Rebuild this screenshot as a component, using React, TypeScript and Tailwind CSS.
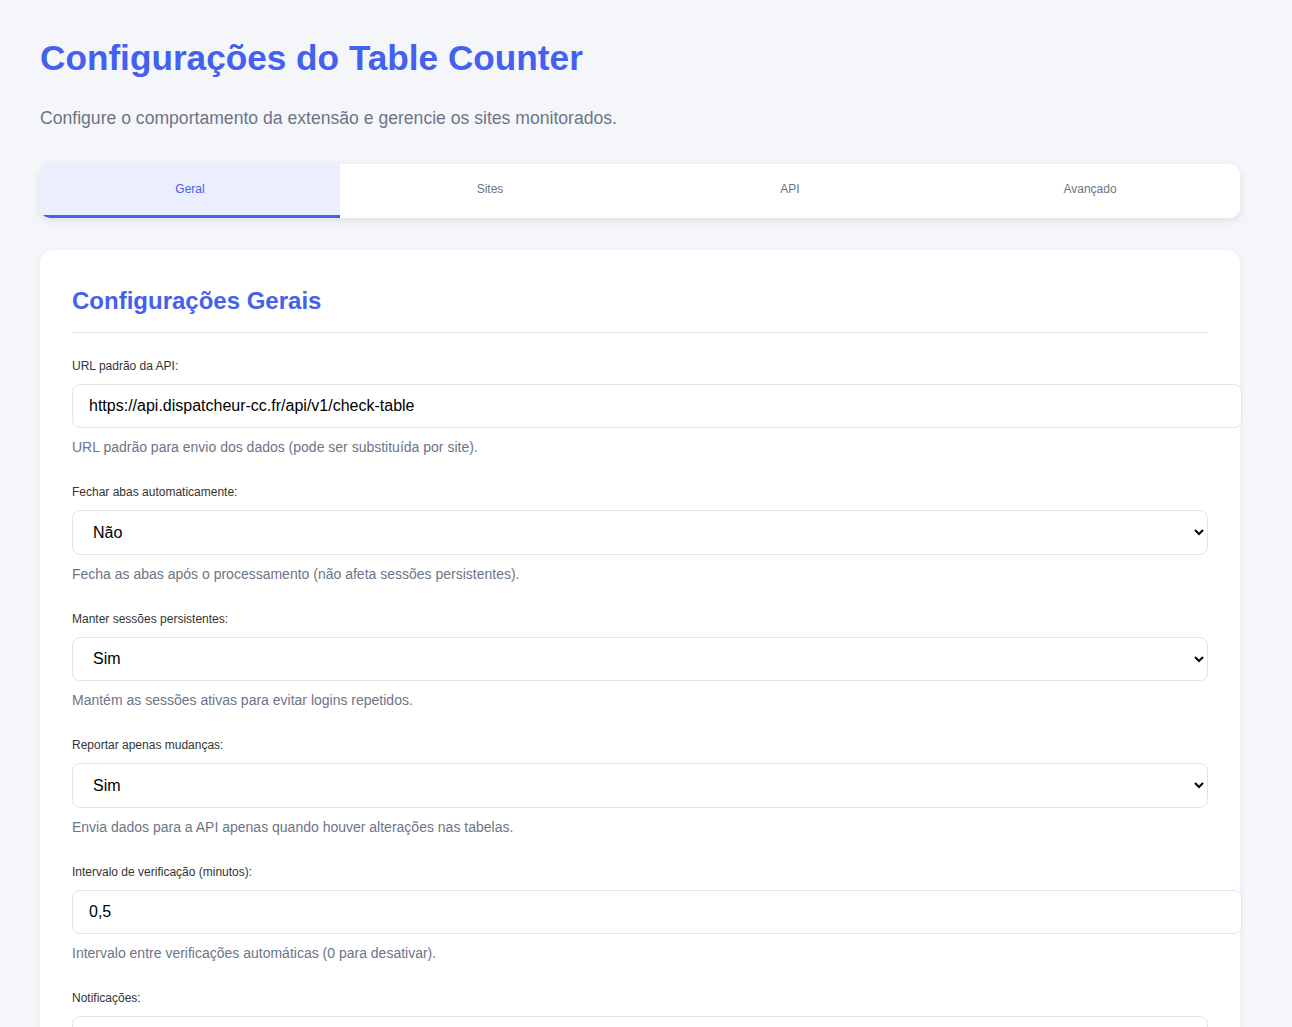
import React from "react";

const font = { fontFamily: '"Liberation Sans", Arial, sans-serif' };

function Label({ children }: { children: React.ReactNode }) {
  return <label className="block text-[12px] leading-[18px] text-[#333333] mb-[9px]">{children}</label>;
}

function Help({ children, mt }: { children: React.ReactNode; mt: string }) {
  return <p className={mt + " text-[14px] leading-[20px] text-[#6c7588]"}>{children}</p>;
}

function TextField({ label, value, help }: { label: string; value: string; help: string }) {
  return (
    <div className="mb-[26px]">
      <Label>{label}</Label>
      <input
        readOnly
        value={value}
        className="box-content block w-full h-[18px] py-[12px] px-[16px] border border-[#e1e5ee] rounded-[8px] text-[16px] leading-[18px] text-black bg-white outline-none"
        style={font}
      />
      <Help mt="mt-[9px]">{help}</Help>
    </div>
  );
}

function SelectField({ label, value, options, help }: { label: string; value: string; options: string[]; help?: string }) {
  return (
    <div className="mb-[26px]">
      <Label>{label}</Label>
      <select
        defaultValue={value}
        className="block w-full h-[44.5px] px-[16px] border border-[#e1e5ee] rounded-[8px] text-[16px] text-black bg-white outline-none"
        style={font}
      >
        {options.map((o) => (
          <option key={o}>{o}</option>
        ))}
      </select>
      {help && <Help mt="mt-[9px]">{help}</Help>}
    </div>
  );
}

export default function App() {
  const tabs = ["Geral", "Sites", "API", "Avançado"];
  return (
    <div className="min-h-screen bg-[#f5f6fa]" style={font}>
      <div className="w-[1200px] ml-[40px] pt-[36px]">
        <h1 className="text-[35.2px] leading-[44px] font-bold text-[#4361ee]">Configurações do Table Counter</h1>
        <p className="mt-[26px] text-[17.6px] leading-[24px] text-[#6c7588]">
          Configure o comportamento da extensão e gerencie os sites monitorados.
        </p>
        <div className="mt-[34px] flex bg-white rounded-[10px] shadow-[0_2px_8px_rgba(0,0,0,0.1)] overflow-hidden h-[54px]">
          {tabs.map((t, i) => (
            <div
              key={t}
              className={
                i === 0
                  ? "flex-1 flex items-center justify-center text-[12px] text-[#4361ee] bg-[#ebeefd] border-b-[3px] border-[#4361ee] pb-[2px]"
                  : "flex-1 flex items-center justify-center text-[12px] text-[#6c7588] border-b-[3px] border-transparent pb-[2px]"
              }
            >
              {t}
            </div>
          ))}
        </div>
        <div className="mt-[32px] bg-white rounded-[12px] shadow-[0_2px_8px_rgba(0,0,0,0.06)] pt-[37px] px-[32px] pb-[40px]">
          <h2 className="text-[24px] leading-[28px] font-bold text-[#4361ee] pb-[17px] border-b border-[#e3e7ee] mb-[24px]">
            Configurações Gerais
          </h2>
          <TextField
            label="URL padrão da API:"
            value="https://api.dispatcheur-cc.fr/api/v1/check-table"
            help="URL padrão para envio dos dados (pode ser substituída por site)."
          />
          <SelectField
            label="Fechar abas automaticamente:"
            value="Não"
            options={["Sim", "Não"]}
            help="Fecha as abas após o processamento (não afeta sessões persistentes)."
          />
          <SelectField
            label="Manter sessões persistentes:"
            value="Sim"
            options={["Sim", "Não"]}
            help="Mantém as sessões ativas para evitar logins repetidos."
          />
          <SelectField
            label="Reportar apenas mudanças:"
            value="Sim"
            options={["Sim", "Não"]}
            help="Envia dados para a API apenas quando houver alterações nas tabelas."
          />
          <TextField
            label="Intervalo de verificação (minutos):"
            value="0,5"
            help="Intervalo entre verificações automáticas (0 para desativar)."
          />
          <SelectField
            label="Notificações:"
            value="Ativadas"
            options={["Ativadas", "Desativadas"]}
            help="Exibe notificações quando houver alterações."
          />
        </div>
      </div>
    </div>
  );
}
